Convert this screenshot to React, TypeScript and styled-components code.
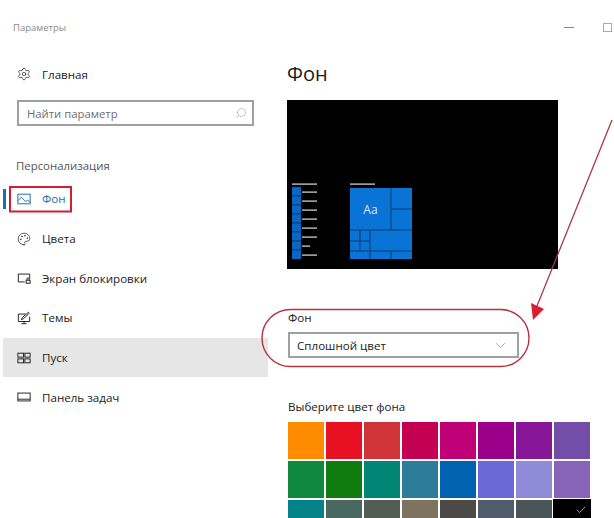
import React from 'react';
import styled, { createGlobalStyle } from 'styled-components';
import { Check, ChevronDown, Palette, Search, Settings } from 'lucide-react';

const swatches: string[] = [
	'#ff8c00', '#e81123', '#d13438', '#c30052', '#bf0077', '#9a0089', '#881798', '#744da9',
	'#10893e', '#107c10', '#018574', '#2d7d9a', '#0063b1', '#6b69d6', '#8e8cd8', '#8764b8',
	'#038387', '#486860', '#525e54', '#7e735f', '#4c4a48', '#515c6b', '#4a5459', '#000000',
];

const ImageIcon = () => (
	<NavSvg viewBox="0 0 16 16">
		<rect x="1" y="2.5" width="14" height="11" />
		<path d="M1 10l4-4 5 5 2-2 3 3" />
	</NavSvg>
);

const LockIcon = () => (
	<NavSvg viewBox="0 0 16 16">
		<path d="M9 12.5H1.5v-9h13v5" />
		<rect x="10.5" y="10.5" width="4.5" height="3.5" />
		<path d="M11.5 10.5V9a1.2 1.2 0 0 1 2.4 0v1.5" />
	</NavSvg>
);

const ThemesIcon = () => (
	<NavSvg viewBox="0 0 16 16">
		<path d="M10 3.5H1.5v8.5h13V6.5" />
		<path d="M8 14.5v-2.5M5 14.5h6" />
		<path d="M5 10l1-2.5 7-6 1 1.2-6.5 6z" />
	</NavSvg>
);

const StartIcon = () => (
	<NavSvg viewBox="0 0 16 16">
		<rect x="1" y="2.5" width="6.5" height="4.5" />
		<rect x="9" y="2.5" width="6" height="4.5" />
		<rect x="1" y="9" width="6.5" height="4.5" />
		<rect x="9" y="9" width="6" height="4.5" />
	</NavSvg>
);

const TaskbarIcon = () => (
	<NavSvg viewBox="0 0 16 16">
		<rect x="1" y="3.5" width="14" height="9" />
		<path d="M1 10.5h14" />
	</NavSvg>
);

const taskbarRows: number[] = [21.5, 30.5, 39.5, 48.5, 57.5, 66.5, 75.5, 84.5];

const Thumbnail = () => (
	<PreviewSvg viewBox="0 0 271 169">
		<rect width="271" height="169" fill="#000" />
		<rect x="5" y="83.5" width="25" height="1.2" fill="#ddd" />
		<rect x="63" y="83.5" width="25" height="1.2" fill="#ddd" />
		<rect x="5" y="87" width="9" height="72" fill="#0a68c4" />
		{taskbarRows.map((y, i) => (
			<g key={y}>
				<rect x="5" y={y + 65} width="9" height="0.8" fill="#06284e" />
				<rect x="15" y={y + 70} width={i === 6 ? 8 : 15} height="1.2" fill="#ddd" />
			</g>
		))}
		<rect x="63" y="88" width="62" height="71" fill="#0a74d6" />
		<g stroke="#053564" strokeWidth="0.9">
			<path d="M104 88v42M104 109h21M63 130h62M73 130v21M83 130v21M63 141h20M63 151h62M104 151v8M83 151v8" />
		</g>
		<text x="83.5" y="114" fill="#cfe6ff" fontSize="12" textAnchor="middle" fontFamily="'Open Sans', sans-serif">
			Aa
		</text>
	</PreviewSvg>
);

const App: React.FunctionComponent = () => {
	return (
		<Page>
			<GlobalStyle />
			<TitleBar>
				<WindowTitle>Параметры</WindowTitle>
				<WindowControls>
					<MinimizeGlyph />
					<MaximizeGlyph />
				</WindowControls>
			</TitleBar>
			<Columns>
				<Sidebar>
					<HomeRow>
						<Settings size={14} strokeWidth={1.2} color="#222" />
						<NavLabel>Главная</NavLabel>
					</HomeRow>
					<SearchBox>
						<SearchText>Найти параметр</SearchText>
						<SearchGlyph size={12} strokeWidth={1.1} color="#999" />
					</SearchBox>
					<SectionTitle>Персонализация</SectionTitle>
					<NavList>
						<NavItem $active>
							<ImageIcon />
							<NavLabel>Фон</NavLabel>
						</NavItem>
						<NavItem>
							<Palette size={14} strokeWidth={1.2} color="#222" />
							<NavLabel>Цвета</NavLabel>
						</NavItem>
						<NavItem>
							<LockIcon />
							<NavLabel>Экран блокировки</NavLabel>
						</NavItem>
						<NavItem>
							<ThemesIcon />
							<NavLabel>Темы</NavLabel>
						</NavItem>
						<NavItem $hover>
							<StartIcon />
							<NavLabel>Пуск</NavLabel>
						</NavItem>
						<NavItem>
							<TaskbarIcon />
							<NavLabel>Панель задач</NavLabel>
						</NavItem>
					</NavList>
				</Sidebar>
				<Content>
					<Heading>Фон</Heading>
					<Thumbnail />
					<FieldLabel>Фон</FieldLabel>
					<Select>
						<span>Сплошной цвет</span>
						<ChevronDown size={17} strokeWidth={0.9} color="#777" />
					</Select>
					<ColorLabel>Выберите цвет фона</ColorLabel>
					<SwatchGrid>
						{swatches.map(color => (
							<Swatch key={color} $color={color} $selected={color === '#000000'}>
								{color === '#000000' && <CheckGlyph size={12} strokeWidth={1.2} color="#fff" />}
							</Swatch>
						))}
					</SwatchGrid>
				</Content>
			</Columns>
			<Annotations viewBox="0 0 614 518">
				<rect x="10" y="187" width="61" height="24.5" fill="none" stroke="#d11f33" strokeWidth="2" />
				<rect x="262" y="309.5" width="267" height="57" rx="28.5" fill="none" stroke="#b8323f" strokeWidth="1.4" />
				<path d="M612 120L537 306" stroke="#a83a46" strokeWidth="1.3" fill="none" />
				<path d="M533 320L531 303L544 309z" fill="#dc1c30" />
			</Annotations>
		</Page>
	);
};

const GlobalStyle = createGlobalStyle`
	html, body {
		margin: 0;
		padding: 0;
		background: #fff;
	}
	* {
		box-sizing: border-box;
	}
`;

const Page = styled.div`
	position: relative;
	width: 614px;
	height: 518px;
	overflow: hidden;
	background: #fff;
	color: #222;
	font-family: 'Open Sans', 'Noto Sans', sans-serif;
	font-size: 11.6px;
`;

/* ************** Title bar ************** */
const TitleBar = styled.header`
	display: flex;
	align-items: center;
	justify-content: space-between;
	height: 54px;
	padding-left: 13px;
`;

const WindowTitle = styled.span`
	font-size: 9.5px;
	color: #8a8a8a;
`;

const WindowControls = styled.div`
	display: flex;
	align-items: center;
	gap: 29px;
	padding-right: 2px;
`;

const MinimizeGlyph = styled.span`
	width: 10px;
	height: 1px;
	background: #888;
`;

const MaximizeGlyph = styled.span`
	width: 9px;
	height: 9px;
	border: 1px solid #aaa;
`;

const Columns = styled.div`
	display: flex;
`;

/* ************** Sidebar ************** */
const Sidebar = styled.nav`
	display: flex;
	flex-direction: column;
	flex: none;
	width: 268px;
	padding-left: 3px;
`;

const NavSvg = styled.svg`
	flex: none;
	width: 14px;
	height: 14px;
	fill: none;
	stroke: currentColor;
	stroke-width: 1.1;
`;

const HomeRow = styled.div`
	display: flex;
	align-items: center;
	gap: 11px;
	height: 40px;
	padding-left: 14px;
`;

const NavLabel = styled.span`
	font-size: 11.6px;
`;

const SearchBox = styled.div`
	display: flex;
	align-items: center;
	justify-content: space-between;
	width: 237px;
	height: 26px;
	margin: 6px 0 0 14px;
	padding: 0 5px 0 8px;
	border: 2px solid #a0a0a0;
`;

const SearchText = styled.span`
	font-size: 11.3px;
	color: #6e6e6e;
`;

const SearchGlyph = styled(Search)`
	transform: scaleX(-1);
`;

const SectionTitle = styled.div`
	height: 20px;
	margin: 30px 0 0 13px;
	font-size: 11.4px;
	line-height: 20px;
	color: #555;
`;

const NavList = styled.div`
	display: flex;
	flex-direction: column;
	margin-top: 3px;
`;

const NavItem = styled.div<{ $active?: boolean; $hover?: boolean }>`
	position: relative;
	display: flex;
	align-items: center;
	gap: 11px;
	height: 39.7px;
	padding-left: 14px;
	background: ${props => (props.$hover ? '#e6e6e6' : 'transparent')};
	color: ${props => (props.$active ? '#1f6fa8' : '#222')};
	&::before {
		content: '';
		display: ${props => (props.$active ? 'block' : 'none')};
		position: absolute;
		left: 0;
		top: 10px;
		width: 3px;
		height: 20px;
		background: #1f6fa8;
	}
`;

/* ************** Content ************** */
const Content = styled.main`
	display: flex;
	flex-direction: column;
	align-items: flex-start;
	padding-left: 19px;
`;

const Heading = styled.h1`
	height: 46px;
	margin: 0;
	font-size: 20px;
	font-weight: 400;
	line-height: 40px;
	color: #1a1a1a;
`;

const PreviewSvg = styled.svg`
	display: block;
	flex: none;
	width: 271px;
	height: 169px;
`;

const FieldLabel = styled.div`
	margin: 40px 0 0 1px;
	height: 18px;
	font-size: 11.6px;
	line-height: 18px;
`;

const Select = styled.div`
	display: flex;
	align-items: center;
	justify-content: space-between;
	width: 231px;
	height: 26px;
	margin: 5px 0 0 1px;
	padding: 0 8px 0 7px;
	border: 2px solid #a0a0a0;
	font-size: 11.6px;
`;

const ColorLabel = styled.div`
	height: 20px;
	margin: 39px 0 0 1px;
	font-size: 11.6px;
	line-height: 20px;
`;

const SwatchGrid = styled.div`
	display: grid;
	grid-template-columns: repeat(8, 36px);
	grid-auto-rows: 36.5px;
	column-gap: 2px;
	row-gap: 2.5px;
	margin: 5px 0 0 1px;
`;

const Swatch = styled.div<{ $color: string; $selected?: boolean }>`
	position: relative;
	background: ${props => props.$color};
	margin: ${props => (props.$selected ? '-1px -1px 0 -1px' : '0')};
`;

const CheckGlyph = styled(Check)`
	position: absolute;
	right: 4px;
	top: 5px;
`;

const Annotations = styled.svg`
	position: absolute;
	left: 0;
	top: 0;
	width: 614px;
	height: 518px;
	pointer-events: none;
`;

export default App;
